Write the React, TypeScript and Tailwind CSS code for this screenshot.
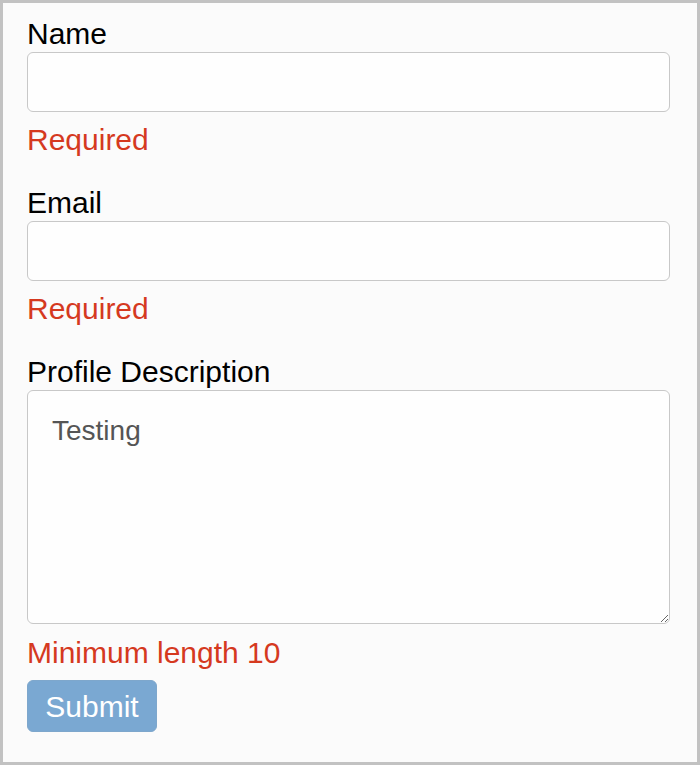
import React from "react";

const font = { fontFamily: '"Liberation Sans", Arial, Helvetica, sans-serif' };

function Field({ label, error, children }: { label: string; error: string; children: React.ReactNode }) {
  return (
    <div className="mb-[28px] flex flex-col">
      <label className="text-[30px] leading-[35px] text-black">{label}</label>
      {children}
      <div className="mt-[10px] text-[30px] leading-[35px] text-[#d5391f]">{error}</div>
    </div>
  );
}

export default function App() {
  return (
    <div
      className="w-[700px] h-[765px] border-[3px] border-[#c2c2c2] bg-[#fbfbfb] pl-[24px] pr-[27px] pt-[13px]"
      style={font}
    >
      <Field label="Name" error="Required">
        <input
          className="mt-px h-[60px] w-full rounded-[6px] border border-[#c8c8c8] bg-[#fefefe] outline-none"
          style={font}
        />
      </Field>
      <Field label="Email" error="Required">
        <input
          className="mt-px h-[60px] w-full rounded-[6px] border border-[#c8c8c8] bg-[#fefefe] outline-none"
          style={font}
        />
      </Field>
      <div className="flex flex-col">
        <label className="text-[30px] leading-[35px] text-black">Profile Description</label>
        <textarea
          defaultValue="Testing"
          className="mt-px h-[234px] w-full resize-y rounded-[6px] border border-[#c8c8c8] bg-[#fefefe] pl-[24px] pt-[22px] text-[28px] leading-[36px] text-[#555555] outline-none"
          style={font}
        />
        <div className="mt-[11px] text-[30px] leading-[35px] text-[#d5391f]">Minimum length 10</div>
      </div>
      <button
        disabled
        className="mt-[10px] h-[52px] w-[130px] rounded-[6px] border border-[#7ea7cc] bg-[#7aa8d2] text-[30px] leading-[35px] text-white"
        style={font}
      >
        Submit
      </button>
    </div>
  );
}
